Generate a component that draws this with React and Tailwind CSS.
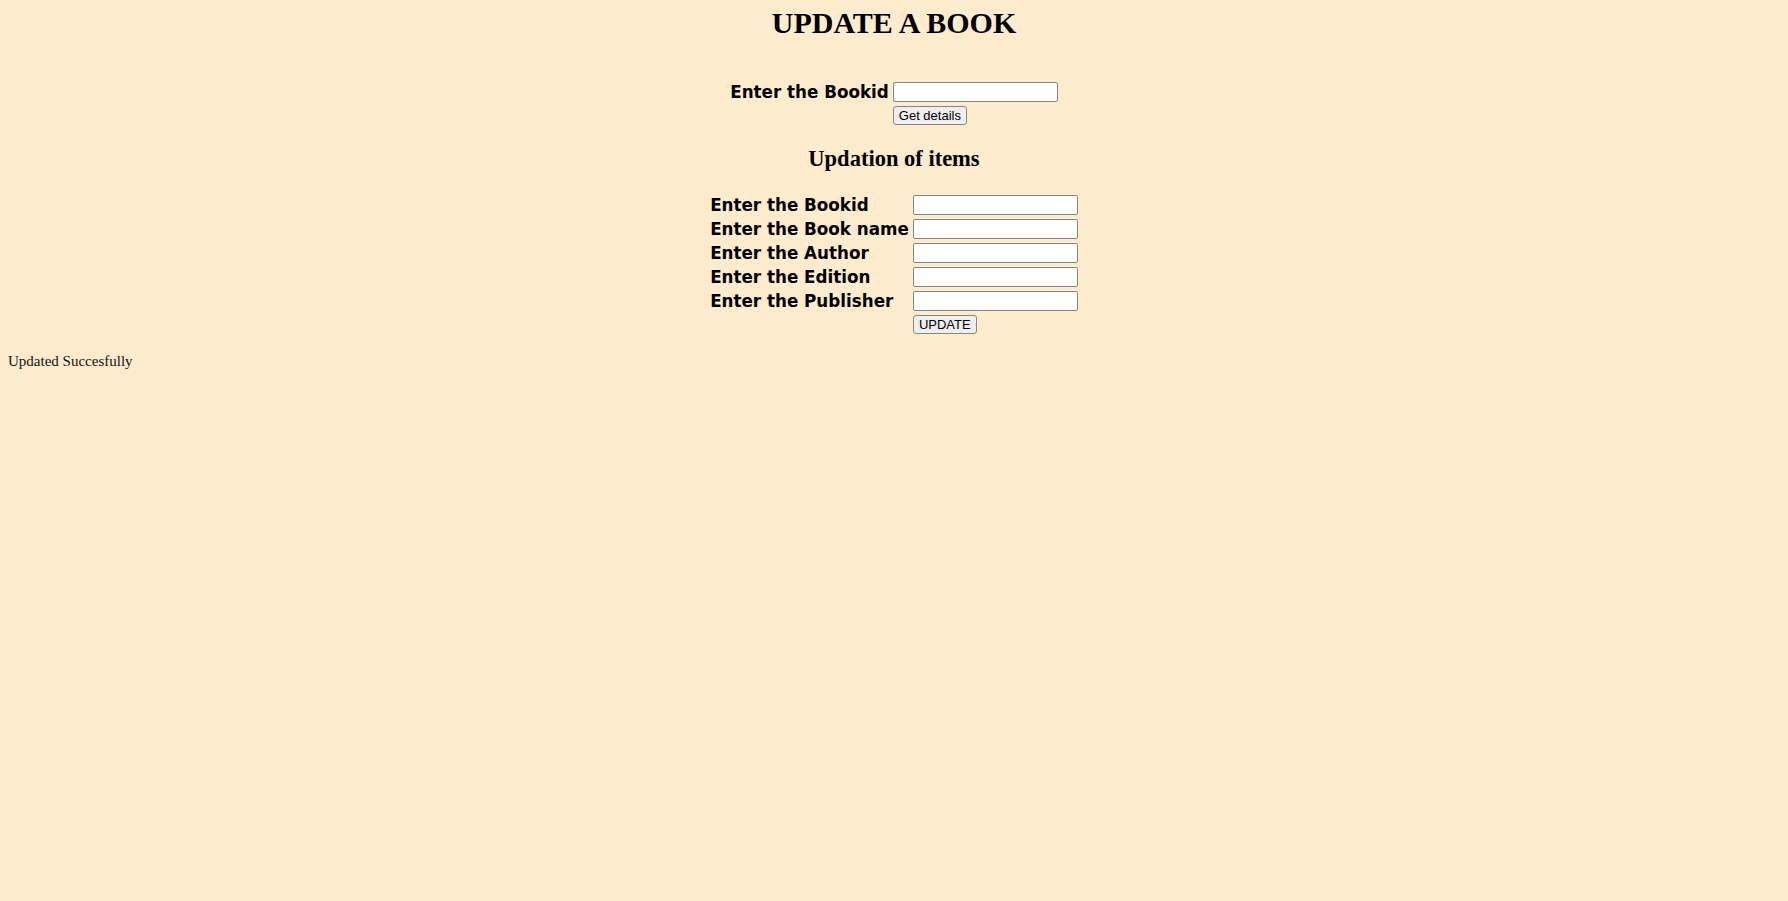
import React from "react";

const inputCls =
  "block w-[165px] h-[20px] bg-white border border-[#858585] rounded-[2px] px-[2px] text-[13px] font-['Liberation_Sans',sans-serif]";
const btnCls =
  "block bg-[#efefef] border border-[#858585] rounded-[3px] px-[5px] h-[19px] leading-[17px] text-[13px] text-black font-['Liberation_Sans',sans-serif]";
const labelCls =
  "p-px font-['DejaVu_Sans',sans-serif] font-bold text-[16.75px] leading-[20px] text-black whitespace-nowrap";

export default function App() {
  const fields = [
    "Enter the Bookid",
    "Enter the Book name",
    "Enter the Author",
    "Enter the Edition",
    "Enter the Publisher",
  ];
  return (
    <div className="min-h-[901px] bg-[#ffebcd] p-2 font-['Liberation_Serif',serif] text-black leading-[normal]">
      <h1 className="text-center text-[30px] font-bold leading-[35px] mt-[-3px]">UPDATE A BOOK</h1>
      <table className="mx-auto mt-[39px] border-separate border-spacing-[2px]">
        <tbody>
          <tr>
            <td className={labelCls}>Enter the Bookid</td>
            <td className="p-px">
              <input className={inputCls} />
            </td>
          </tr>
          <tr>
            <td className="p-px"></td>
            <td className="p-px">
              <button className={btnCls}>Get details</button>
            </td>
          </tr>
        </tbody>
      </table>
      <h2 className="text-center text-[22.5px] font-bold leading-[26px] mt-[18px]">Updation of items</h2>
      <table className="mx-auto mt-[20px] border-separate border-spacing-[2px]">
        <tbody>
          {fields.map((f) => (
            <tr key={f}>
              <td className={labelCls}>{f}</td>
              <td className="p-px">
                <input className={inputCls} />
              </td>
            </tr>
          ))}
          <tr>
            <td className="p-px"></td>
            <td className="p-px">
              <button className={btnCls}>UPDATE</button>
            </td>
          </tr>
        </tbody>
      </table>
      <p className="mt-[16px] text-[15px] leading-[17px] text-[#111]">Updated Succesfully</p>
    </div>
  );
}
